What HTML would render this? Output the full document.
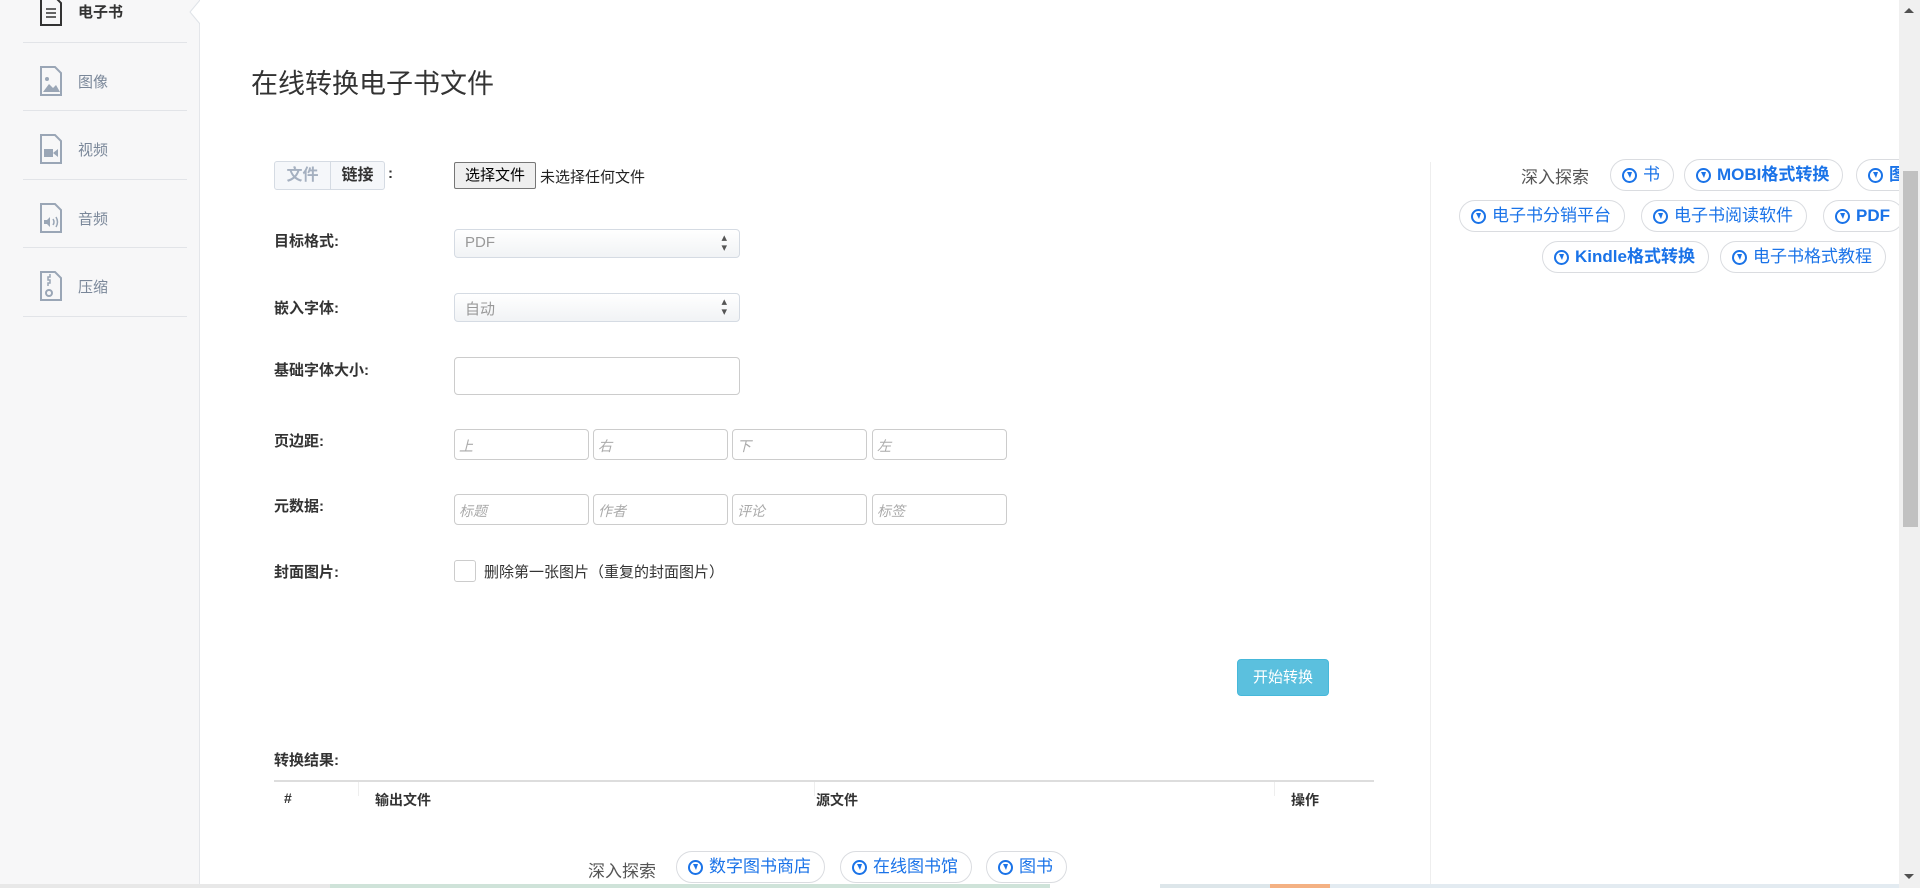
<!DOCTYPE html>
<html><head><meta charset="utf-8"><style>
*{box-sizing:border-box;margin:0;padding:0}
body{width:1920px;height:888px;overflow:hidden;background:#fff;font-family:"Liberation Sans","Noto Sans CJK SC",sans-serif;color:#333;position:relative;font-size:14px}
.abs{position:absolute}
.side{left:0;top:0;width:200px;height:888px;background:#f7f7f8;border-right:1px solid #e4e6ea}
.sep{position:absolute;left:23px;width:164px;height:1px;background:#e2e4e8}
.item{position:absolute;left:39px;display:flex;align-items:center;color:#7a8799;font-size:15px}
.item svg{margin-right:15px}
.lbl{position:absolute;left:274px;font-size:15px;color:#333;font-weight:bold}
.sel{position:absolute;left:454px;width:286px;height:29px;border:1px solid #d5dbe3;border-radius:4px;background:linear-gradient(#fff,#f1f3f5);color:#999;font-size:15px;padding:4px 10px}
.sel:after{content:"▴\A▾";white-space:pre;position:absolute;right:12px;top:3px;font-size:11px;line-height:10px;color:#555}
.inp{position:absolute;height:31px;border:1px solid #ccc;border-radius:4px;color:#aaa;font-style:italic;font-size:14px;padding:6px 4px}
.pill{position:absolute;height:32px;border:1px solid #dadce0;border-radius:16px;color:#1a73e8;font-size:17px;line-height:30px;padding:0 13px 0 11px;white-space:nowrap;background:#fff;display:flex;align-items:center}
.pill i{display:inline-block;width:15px;height:15px;border:2px solid #1a73e8;border-radius:50%;margin-right:6px;position:relative;font-style:normal;flex:none}
.pill i:after{content:"";position:absolute;left:3px;top:2px;width:0;height:0;border-left:3px solid transparent;border-right:2px solid transparent;border-top:6px solid #1a73e8}
.th{position:absolute;top:790px;font-size:14px;font-weight:bold;color:#333}
</style></head><body>
<div class="abs side">
<div class="sep" style="top:42px"></div><div class="sep" style="top:110px"></div><div class="sep" style="top:179px"></div><div class="sep" style="top:247px"></div><div class="sep" style="top:316px"></div>
<div class="item" style="top:-4px;color:#333;font-weight:bold"><svg width="24" height="30" viewBox="0 0 24 30"><path d="M2 1h14l6 6v22H2z" fill="none" stroke="#333" stroke-width="2"/><path d="M7 13h10M7 17h10M7 21h10" stroke="#333" stroke-width="1.6"/></svg>电子书</div>
<div class="item" style="top:66px"><svg width="24" height="30" viewBox="0 0 24 30"><path d="M2 1h14l6 6v22H2z" fill="none" stroke="#9aa6b6" stroke-width="2"/><circle cx="8" cy="13" r="2" fill="#9aa6b6"/><path d="M4 26l6-8 4 4 3-3 4 7z" fill="#9aa6b6"/></svg>图像</div>
<div class="item" style="top:134px"><svg width="24" height="30" viewBox="0 0 24 30"><path d="M2 1h14l6 6v22H2z" fill="none" stroke="#9aa6b6" stroke-width="2"/><rect x="5" y="15" width="9" height="8" fill="#9aa6b6"/><path d="M14 19l5-4v8z" fill="#9aa6b6"/></svg>视频</div>
<div class="item" style="top:203px"><svg width="24" height="30" viewBox="0 0 24 30"><path d="M2 1h14l6 6v22H2z" fill="none" stroke="#9aa6b6" stroke-width="2"/><path d="M5 17h3l3-3v10l-3-3H5z" fill="#9aa6b6"/><path d="M14 16q2 3 0 6M17 14q3 5 0 10" fill="none" stroke="#9aa6b6" stroke-width="1.5"/></svg>音频</div>
<div class="item" style="top:271px"><svg width="24" height="30" viewBox="0 0 24 30"><path d="M2 1h14l6 6v22H2z" fill="none" stroke="#9aa6b6" stroke-width="2"/><path d="M11 3v3h-2v3h2v3h-2v3" stroke="#9aa6b6" stroke-width="1.5" fill="none"/><circle cx="10" cy="22" r="3" fill="none" stroke="#9aa6b6" stroke-width="2"/></svg>压缩</div>
</div>
<svg class="abs" style="left:187px;top:0" width="14" height="30"><path d="M13 0L3 12L13 24" fill="#fff" stroke="#dfe3e8"/><rect x="13" y="0" width="2" height="30" fill="#fff"/></svg>
<div class="abs" style="left:251px;top:62px;font-size:27px;color:#333">在线转换电子书文件</div>
<div class="abs" style="left:1430px;top:162px;width:1px;height:726px;background:#eee"></div>

<div class="abs" style="left:274px;top:161px;width:111px;height:29px;border:1px solid #d5dbe3;border-radius:3px;display:flex;font-size:16px;font-weight:bold;background:#f5f7fa">
<div style="width:56px;text-align:center;line-height:27px;color:#a5b0c0;border-right:1px solid #d5dbe3">文件</div><div style="flex:1;text-align:center;line-height:27px;color:#333">链接</div></div>
<div class="abs" style="left:388px;top:165px;font-weight:bold;font-size:15px">:</div>
<div class="abs" style="left:454px;top:162px;width:82px;height:27px;border:1px solid #767676;border-radius:2px;background:#efefef;font-size:15px;text-align:center;line-height:25px;color:#000">选择文件</div>
<div class="abs" style="left:540px;top:166px;font-size:15px;color:#222">未选择任何文件</div>

<div class="lbl" style="top:230px">目标格式:</div>
<div class="sel" style="top:229px">PDF</div>
<div class="lbl" style="top:297px">嵌入字体:</div>
<div class="sel" style="top:293px">自动</div>
<div class="lbl" style="top:359px">基础字体大小:</div>
<div class="inp" style="left:454px;top:357px;width:286px;height:38px"></div>
<div class="lbl" style="top:430px">页边距:</div>
<div class="inp" style="left:454px;top:429px;width:135px">上</div>
<div class="inp" style="left:593px;top:429px;width:135px">右</div>
<div class="inp" style="left:732px;top:429px;width:135px">下</div>
<div class="inp" style="left:872px;top:429px;width:135px">左</div>
<div class="lbl" style="top:495px">元数据:</div>
<div class="inp" style="left:454px;top:494px;width:135px">标题</div>
<div class="inp" style="left:593px;top:494px;width:135px">作者</div>
<div class="inp" style="left:732px;top:494px;width:135px">评论</div>
<div class="inp" style="left:872px;top:494px;width:135px">标签</div>
<div class="lbl" style="top:561px">封面图片:</div>
<div class="abs" style="left:454px;top:560px;width:22px;height:22px;border:1px solid #ccc;border-radius:3px"></div>
<div class="abs" style="left:484px;top:561px;font-size:15px;color:#333">删除第一张图片（重复的封面图片）</div>

<div class="abs" style="left:1237px;top:659px;width:92px;height:37px;background:#5bc0de;border:1px solid #46b8da;border-radius:4px;color:#fff;font-size:15px;text-align:center;line-height:35px">开始转换</div>

<div class="lbl" style="top:749px">转换结果:</div>
<div class="abs" style="left:274px;top:780px;width:1100px;height:2px;background:#ddd"></div>
<div class="abs" style="left:358px;top:782px;width:1px;height:14px;background:#eee"></div>
<div class="abs" style="left:814px;top:782px;width:1px;height:14px;background:#eee"></div>
<div class="abs" style="left:1274px;top:782px;width:1px;height:14px;background:#eee"></div>
<div class="th" style="left:284px">#</div>
<div class="th" style="left:375px">输出文件</div>
<div class="th" style="left:816px">源文件</div>
<div class="th" style="left:1291px">操作</div>

<div class="abs" style="left:588px;top:857px;font-size:17px;color:#555">深入探索</div>
<div class="pill" style="left:676px;top:851px"><i></i>数字图书商店</div>
<div class="pill" style="left:840px;top:851px"><i></i>在线图书馆</div>
<div class="pill" style="left:986px;top:851px"><i></i>图书</div>
<div class="abs" style="left:0;top:884px;width:1900px;height:4px;background:linear-gradient(90deg,#e8e8e8 0 330px,#cfe3d9 330px 1050px,#fff 1050px 1160px,#dde6ea 1160px 1270px,#f4b183 1270px 1330px,#e3ebf1 1330px)"></div>

<div class="abs" style="left:1521px;top:163px;font-size:17px;color:#555">深入探索</div>
<div class="pill" style="left:1610px;top:159px"><i></i>书</div>
<div class="pill" style="left:1684px;top:159px;font-weight:bold"><i></i>MOBI格式转换</div>
<div class="pill" style="left:1856px;top:159px;font-weight:bold"><i></i>图</div>
<div class="pill" style="left:1459px;top:200px"><i></i>电子书分销平台</div>
<div class="pill" style="left:1641px;top:200px"><i></i>电子书阅读软件</div>
<div class="pill" style="left:1823px;top:200px;font-weight:bold"><i></i>PDF</div>
<div class="pill" style="left:1542px;top:241px;font-weight:bold"><i></i>Kindle格式转换</div>
<div class="pill" style="left:1720px;top:241px"><i></i>电子书格式教程</div>

<div class="abs" style="left:1899px;top:0;width:21px;height:888px;background:#f0f0f0"></div>
<div class="abs" style="left:1903px;top:171px;width:15px;height:356px;background:#c1c1c1"></div>
<div class="abs" style="left:1904px;top:8px;width:0;height:0;border-left:5px solid transparent;border-right:5px solid transparent;border-bottom:5px solid #505050"></div>
<div class="abs" style="left:1904px;top:874px;width:0;height:0;border-left:5px solid transparent;border-right:5px solid transparent;border-top:5px solid #505050"></div>
</body></html>
